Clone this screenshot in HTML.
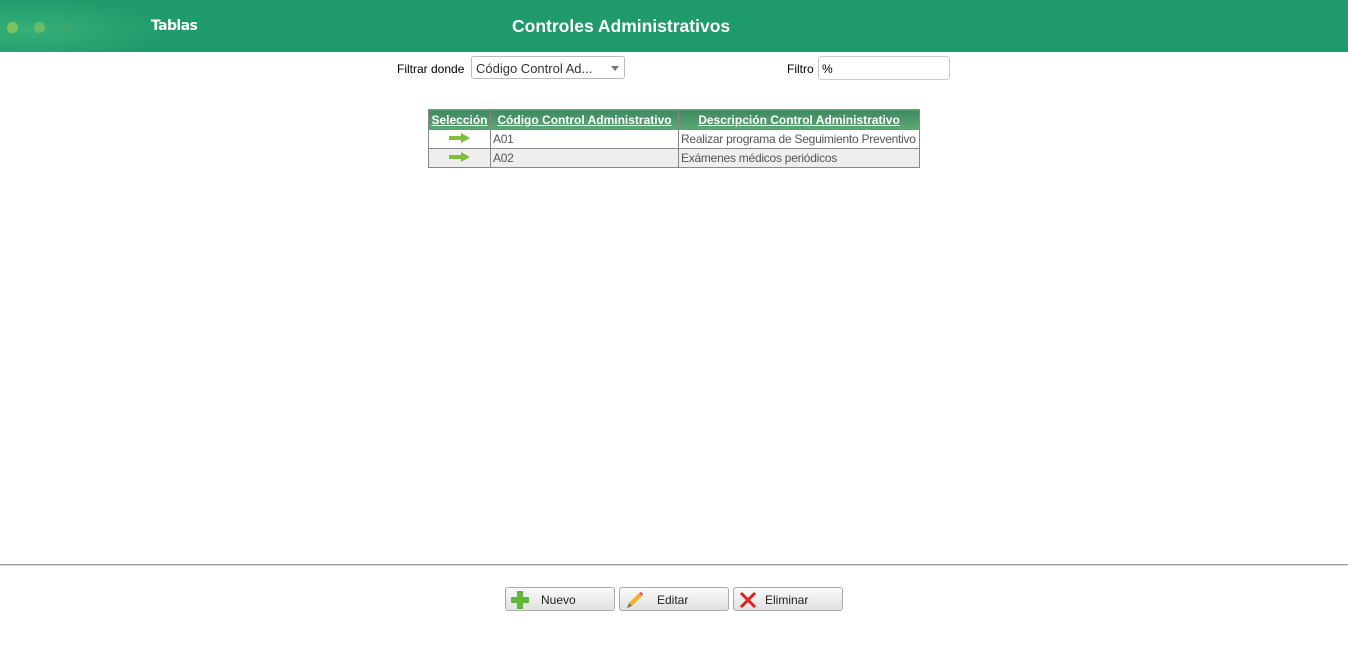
<!DOCTYPE html>
<html><head><meta charset="utf-8"><style>
body{margin:0;width:1348px;height:657px;background:#fff;font-family:"Liberation Sans",sans-serif;position:relative;overflow:hidden}
.hdr{position:absolute;left:0;top:0;width:1348px;height:52px;background:#1f9a6b}
.glow{position:absolute;left:0;top:0;width:160px;height:52px;background:radial-gradient(ellipse at 30px 30px,rgba(70,190,130,.6),rgba(31,154,107,0) 140px)}
.dot{position:absolute;top:22px;width:11px;height:11px;border-radius:50%}
.t1{position:absolute;left:151px;top:18px;color:#fff;font:bold 14px "DejaVu Sans",sans-serif;letter-spacing:-0.6px}
.t2{position:absolute;left:512px;top:16px;color:#fff;font:bold 17.5px "Liberation Sans",sans-serif}
.lbl{position:absolute;font-size:12px;color:#000}
.sel{position:absolute;left:471px;top:56px;width:154px;height:23px;border:1px solid #bbb;border-radius:3px;font-size:13px;color:#333;box-sizing:border-box;padding:4px 4px}
.sel:after{content:"";position:absolute;right:5px;top:9px;border:4px solid transparent;border-top:5px solid #777}
.inp{position:absolute;left:818px;top:56px;width:132px;height:24px;border:1px solid #ccc;border-radius:3px;box-sizing:border-box;font-size:12px;padding:5px 3px}
table{position:absolute;left:428px;top:109px;border-collapse:collapse;font-size:12px;table-layout:fixed;width:492px;white-space:nowrap}
th{background:linear-gradient(#3f8a5f,#5ca774);color:#fff;font-weight:bold;height:19px;padding:0 1px;text-decoration:underline;border:1px solid #888;border-bottom:none;overflow:hidden}
td{border:1px solid #888;height:18px;padding:0 2px;color:#555;overflow:hidden;letter-spacing:-0.25px}
tr.r2 td{background:#eee}
.line{position:absolute;left:0;top:564px;width:1348px;height:1px;background:#999}
.line2{position:absolute;left:0;top:565px;width:1348px;height:1px;background:#ddd}
.btn{position:absolute;top:587px;width:110px;height:24px;border:1px solid #aaa;border-radius:3px;box-sizing:border-box;background:linear-gradient(#fafafa,#e0e0e0);font-size:12px;color:#222}
.btn span{position:absolute;top:5px}
</style></head><body>
<div class="hdr"><div class="glow"></div>
<div class="dot" style="left:7px;background:#7fc45a"></div>
<div class="dot" style="left:34px;background:#6bbb63"></div>
<div class="dot" style="left:61px;background:#3aa56c"></div>
<div class="t1">Tablas</div><div class="t2">Controles Administrativos</div></div>
<div class="lbl" style="left:397px;top:62px">Filtrar donde</div>
<div class="sel">Código Control Ad...</div>
<div class="lbl" style="left:787px;top:62px">Filtro</div>
<div class="inp">%</div>
<table>
<colgroup><col style="width:62px"><col style="width:188px"><col style="width:241px"></colgroup>
<tr><th>Selección</th><th>Código Control Administrativo</th><th>Descripción Control Administrativo</th></tr>
<tr><td style="text-align:center"><svg width="22" height="10"><path d="M0 3h12V0l9 5-9 5V7H0z" fill="#7cc03c"/></svg></td><td>A01</td><td>Realizar programa de Seguimiento Preventivo</td></tr>
<tr class="r2"><td style="text-align:center"><svg width="22" height="10"><path d="M0 3h12V0l9 5-9 5V7H0z" fill="#7cc03c"/></svg></td><td>A02</td><td>Exámenes médicos periódicos</td></tr>
</table>
<div class="line"></div><div class="line2"></div>
<div class="btn" style="left:505px"><svg style="position:absolute;left:4px;top:2px" width="20" height="20"><path d="M7 1h6v6h6v6h-6v6H7v-6H1V7h6z" fill="#5fb83a"/></svg><span style="left:35px">Nuevo</span></div>
<div class="btn" style="left:619px"><svg style="position:absolute;left:4px;top:2px" width="20" height="20"><path d="M3 18l2-5L15 3l3 3L8 16z" fill="#f0b030"/><path d="M3 18l2-5 3 3z" fill="#777"/><path d="M15 3l2-1 2 2-1 2z" fill="#e05050"/></svg><span style="left:37px">Editar</span></div>
<div class="btn" style="left:733px"><svg style="position:absolute;left:5px;top:3px" width="18" height="18"><path d="M2 2L16 16M16 2L2 16" stroke="#e02020" stroke-width="3"/></svg><span style="left:31px">Eliminar</span></div>
</body></html>
